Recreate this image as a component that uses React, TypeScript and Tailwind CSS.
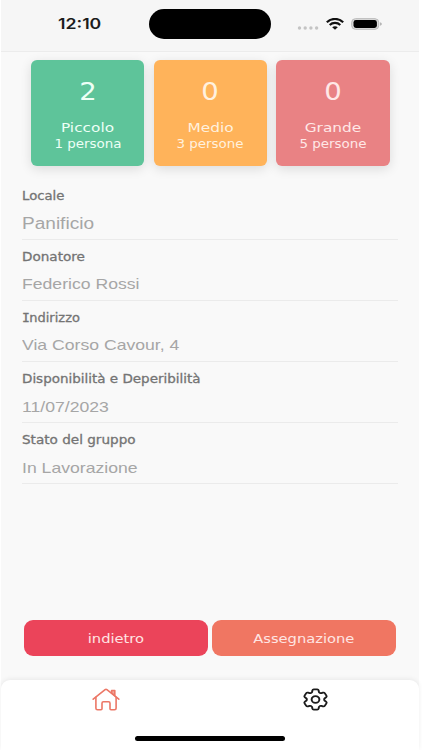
import type { ReactNode } from "react";
import { HiOutlineCog6Tooth } from "react-icons/hi2";

interface SizeCard {
  count: number;
  name: string;
  people: string;
  color: string;
}

interface Field {
  label: ReactNode;
  value: string;
  labelClass: string;
  valueClass: string;
}

const cards: SizeCard[] = [
  { count: 2, name: "Piccolo", people: "1 persona", color: "bg-[#5ec49a] text-[#edfff6]" },
  { count: 0, name: "Medio", people: "3 persone", color: "bg-[#ffb35a] text-[#fff1df]" },
  { count: 0, name: "Grande", people: "5 persone", color: "bg-[#e98284] text-[#ffe8e7]" },
];

const fields: Field[] = [
  { label: "Locale", value: "Panificio", labelClass: "scale-x-[1.15]", valueClass: "mt-[10px] text-[16px] scale-x-[1.19]" },
  {
    label: "Donatore",
    value: "Federico Rossi",
    labelClass: "scale-x-[1.18]",
    valueClass: "mt-[9px] text-[14.5px] scale-x-[1.215]",
  },
  {
    label: (
      <>
        <span className="font-['DejaVu_Sans_Mono'] tracking-[-0.5px]">I</span>ndirizzo
      </>
    ),
    value: "Via Corso Cavour, 4",
    labelClass: "scale-x-[1.13]",
    valueClass: "mt-[9px] text-[14.5px] scale-x-[1.215]",
  },
  {
    label: "Disponibilità e Deperibilità",
    value: "11/07/2023",
    labelClass: "scale-x-[1.172]",
    valueClass: "mt-[10px] text-[14.5px] scale-x-[1.215]",
  },
  {
    label: "Stato del gruppo",
    value: "In Lavorazione",
    labelClass: "scale-x-[1.18]",
    valueClass: "mt-[10px] text-[14.5px] scale-x-[1.215]",
  },
];

function StatusBar() {
  return (
    <header className="flex h-[52px] shrink-0 items-start border-b border-[#ececec] bg-[#f6f6f6]">
      <div className="flex h-12 w-[148px] items-center pl-[57px]">
        <span className="origin-left scale-x-[1.22] font-['Inter',sans-serif] text-[14.5px] font-semibold text-[#1c1c1c]">
          12:10
        </span>
      </div>
      <div className="mt-[9px] h-[30px] w-[122px] rounded-full bg-black" />
      <div className="ml-[26px] flex h-12 items-center">
        <svg width="22" height="4" viewBox="0 0 22 4" className="mt-[7px]" fill="#c4c4c4">
          <circle cx="2.5" cy="2" r="1.7" />
          <circle cx="8.2" cy="2" r="1.7" />
          <circle cx="13.9" cy="2" r="1.7" />
          <circle cx="19.6" cy="2" r="1.7" />
        </svg>
        <svg width="18" height="12" viewBox="0 0 18 12" className="ml-[7px]" fill="none" stroke="#111" strokeWidth="2.1">
          <path d="M.8 4.2C5.2-.2 12.8-.2 17.2 4.2" />
          <path d="M3.7 7C6.6 4.2 11.4 4.2 14.3 7" />
          <path d="M6.2 9.2C7.7 7.8 10.3 7.8 11.8 9.2L9 11.8z" fill="#111" stroke="none" />
        </svg>
        <svg width="32" height="12" viewBox="0 0 32 12" className="ml-[7px]">
          <rect x=".7" y=".7" width="27" height="10.6" rx="3.7" fill="#dcdcdc" stroke="#b8b8b8" />
          <rect x="2.5" y="2" width="23.4" height="8" rx="2.4" fill="#000" />
          <path d="M29.3 4.2c1.8.6 1.8 3 0 3.6z" fill="#999" />
        </svg>
      </div>
    </header>
  );
}

function HouseIcon() {
  return (
    <svg width="28" height="23" viewBox="0 0 28 23" fill="none" stroke="#ec7766" strokeWidth="1.6" strokeLinecap="round" strokeLinejoin="round">
      <path d="M1.2 11.2 13.1 1.7q.9-.7 1.8 0L26.8 11.2" />
      <path d="M3.9 9.2V20.2q0 1.5 1.6 1.5H9q1 0 1-1V15.2q0-1.4 1.4-1.4h5.2q1.4 0 1.4 1.4v5.5q0 1 1 1h3.6q1.5 0 1.5-1.5V9.2" />
      <path d="M19.6 5V2.5h3.2v5.2z" fill="#f3a89c" />
    </svg>
  );
}

export default function App() {
  return (
    <div className="h-[750px] w-[422px] overflow-hidden bg-white pr-[3px] pl-px font-['DejaVu_Sans',sans-serif]">
      <div className="flex h-full flex-col bg-[#f9f9f9]">
        <StatusBar />

        <section className="mt-2 flex gap-[9.5px] pl-[30px]">
          {cards.map((card) => (
            <div
              key={card.name}
              className={`flex h-[106px] w-[113.2px] flex-col items-center rounded-md shadow-[0_3px_12px_rgba(0,0,0,0.12)] ${card.color}`}
            >
              <span className="mt-4 scale-x-[1.1] text-[25px] leading-8">{card.count}</span>
              <span className="mt-3 scale-x-[1.18] text-[13px] leading-4">{card.name}</span>
              <span className="scale-x-[1.12] text-[12px] leading-4">{card.people}</span>
            </div>
          ))}
        </section>

        <section className="mt-[12.5px] pr-[21px] pl-[21px]">
          {fields.map((field) => (
            <div key={field.value} className="flex h-[61.2px] flex-col items-start border-b border-[#ebebeb] pt-[9px]">
              <span
                className={`origin-left text-[11.5px] leading-4 whitespace-nowrap text-[#747474] [-webkit-text-stroke:0.3px_#747474] ${field.labelClass}`}
              >
                {field.label}
              </span>
              <span
                className={`origin-left font-['Liberation_Sans',sans-serif] leading-5 whitespace-nowrap text-[#a6a6a6] ${field.valueClass}`}
              >
                {field.value}
              </span>
            </div>
          ))}
        </section>

        <div className="mt-auto mb-6 flex gap-1 pl-[23px] text-[13px] text-[#ffe5e3]">
          <button className="h-9 w-[184px] rounded-[9px] bg-[#eb445a] pt-px">
            <span className="inline-block scale-x-[1.13]">indietro</span>
          </button>
          <button className="h-9 w-[184px] rounded-[9px] bg-[#f07662] pt-px">
            <span className="inline-block scale-x-[1.13]">Assegnazione</span>
          </button>
        </div>

        <nav className="flex h-[70px] shrink-0 flex-col items-center rounded-t-[9px] bg-white shadow-[0_-1px_5px_rgba(0,0,0,0.07)]">
          <div className="flex h-8 w-full">
            <div className="flex w-1/2 justify-center pt-2 pl-px">
              <HouseIcon />
            </div>
            <div className="flex w-1/2 justify-center pt-[6px] pl-px">
              <HiOutlineCog6Tooth preserveAspectRatio="none" className="h-[27px] w-[31px] text-[#1c1c1c]" />
            </div>
          </div>
          <div className="mt-6 h-[5px] w-[150px] rounded-full bg-black" />
        </nav>
      </div>
    </div>
  );
}
